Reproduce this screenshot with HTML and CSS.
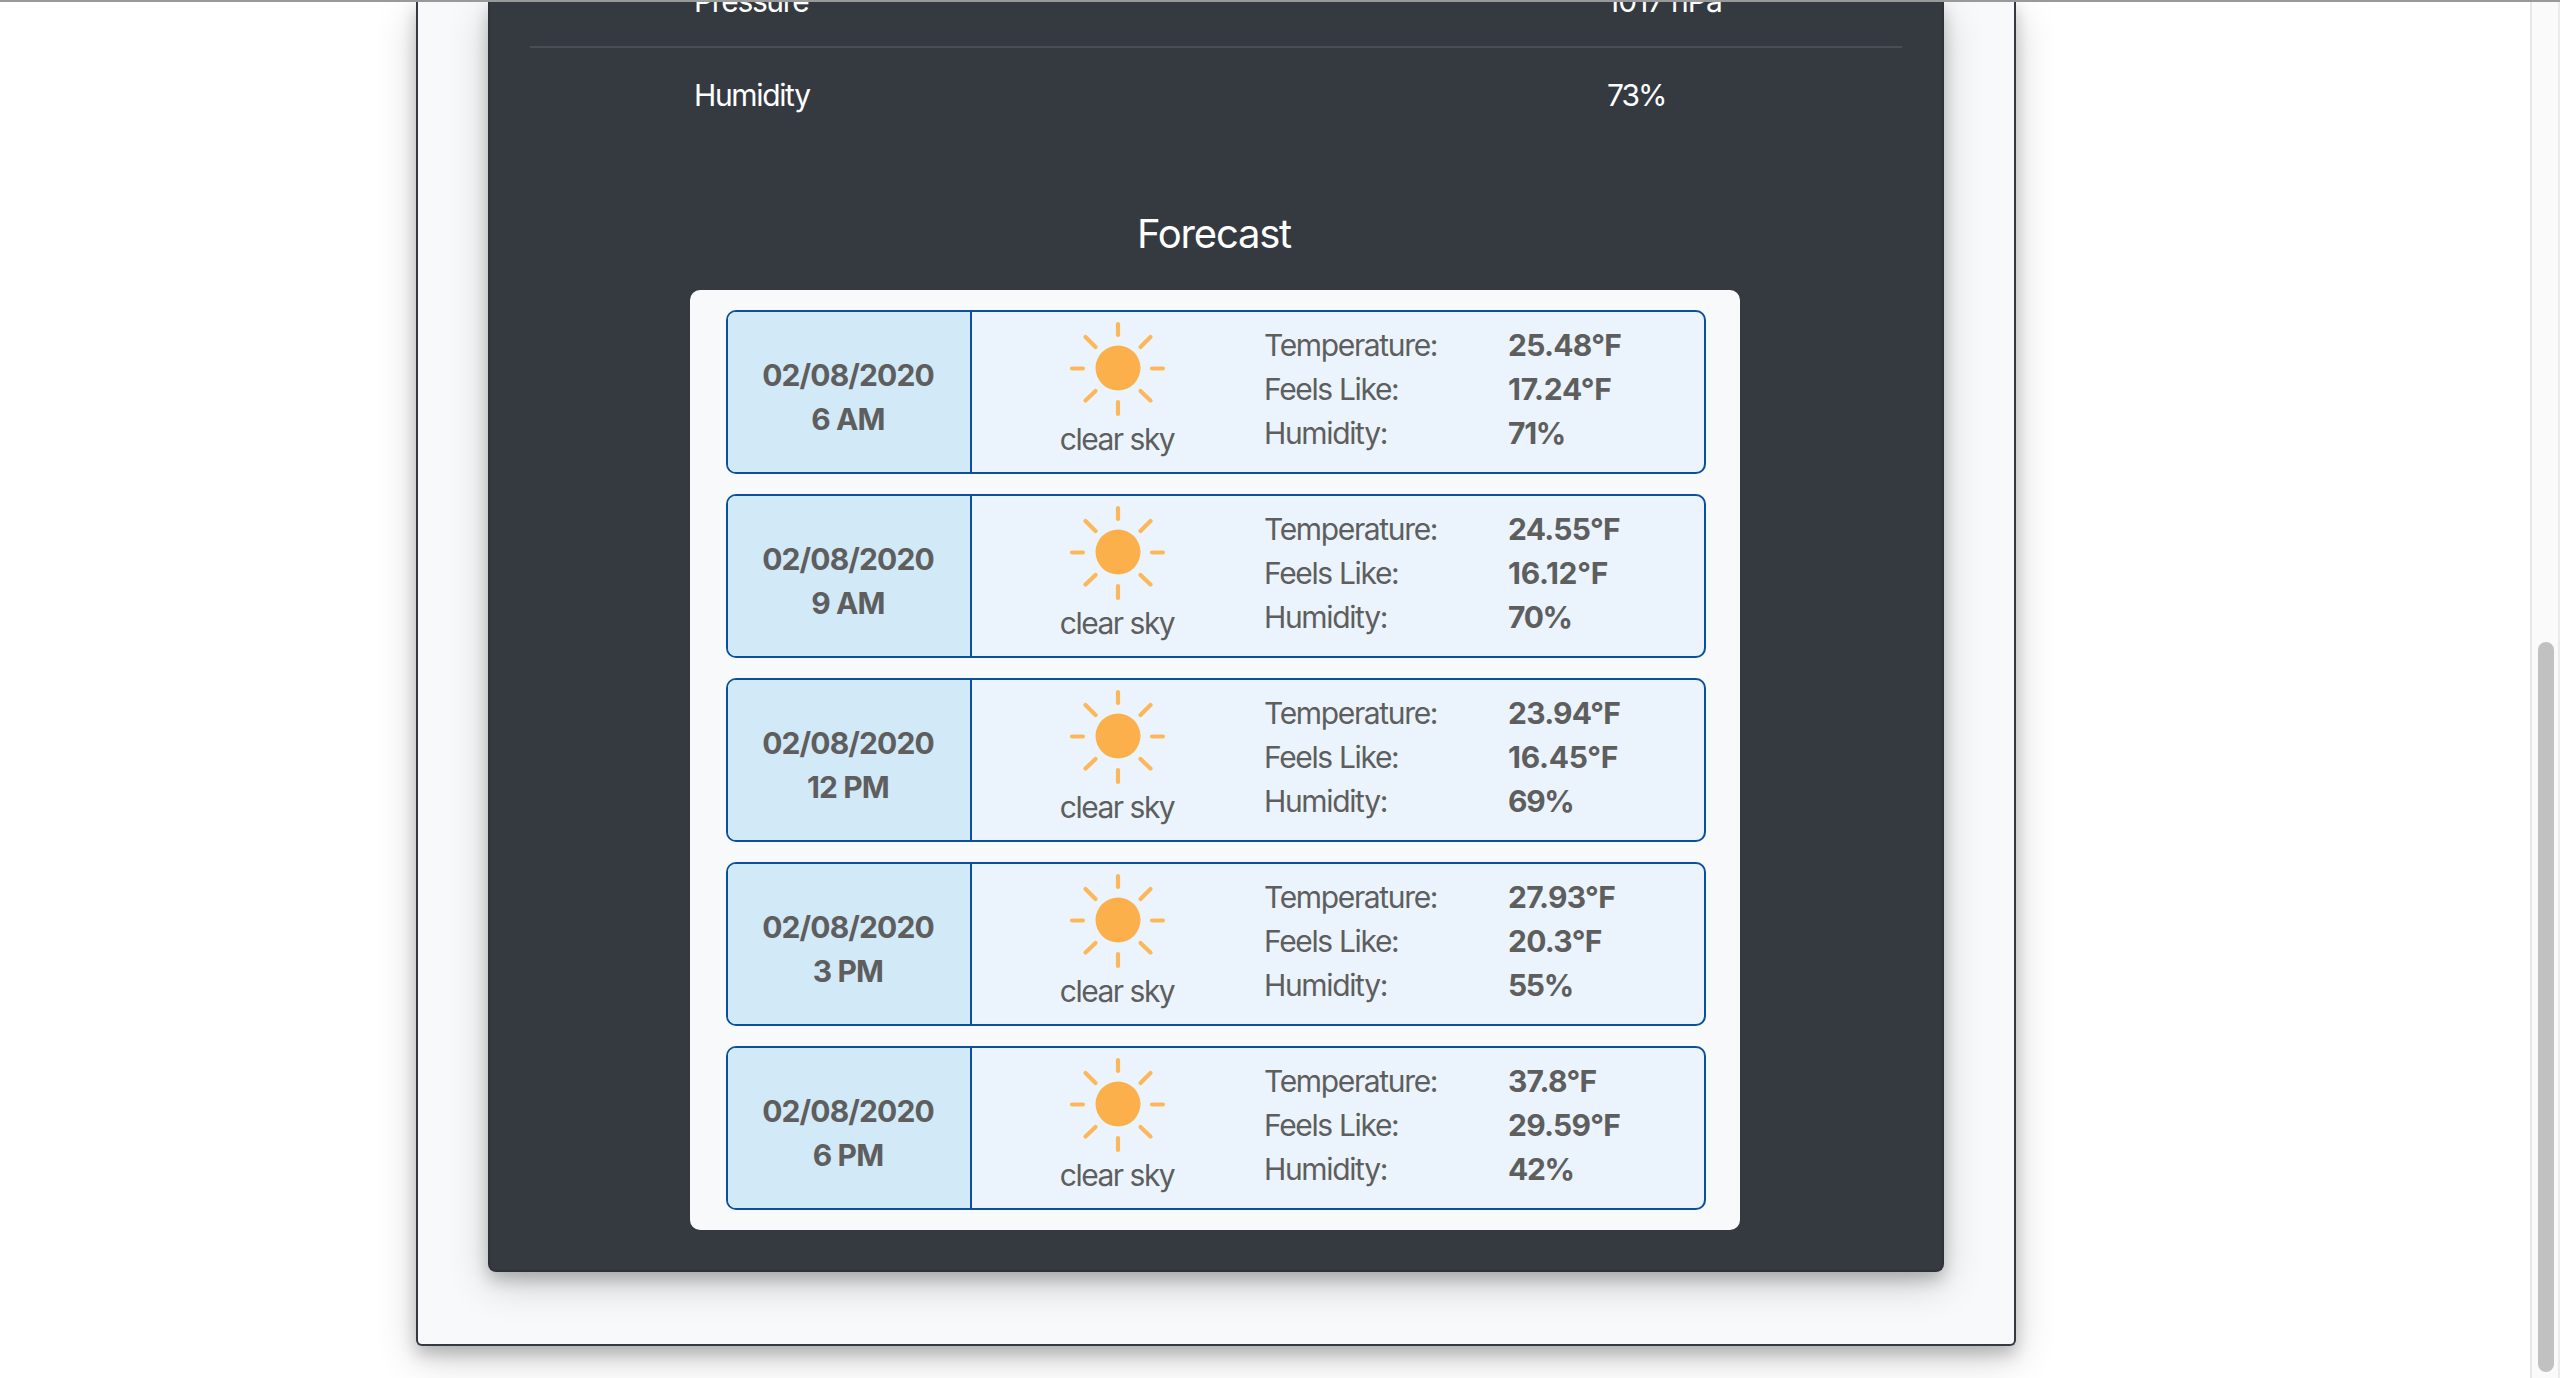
FILE: index.html
```
<!DOCTYPE html>
<html lang="en">
<head>
<meta charset="utf-8">
<title>Weather</title>
<link rel="stylesheet" href="styles.css">
</head>
<body>
<svg width="0" height="0" class="defs"><symbol id="sun" viewBox="0 0 100 100"><circle cx="50" cy="50" r="22.500"/><path d="M50 6v11M50 84v12M4 50.500h11M84 50.500h11M17.500 19l10 10M82.500 19l-10 10M17.500 82.500l10-9.500M82.500 82.500l-10-9.500"/></symbol></svg>
<main class="page">
  <section class="outer-card">
    <div class="inner-card">
      <div class="stat clipped"><span>Pressure</span><span class="hpa">1017 hPa</span></div>
      <div class="stat"><span>Humidity</span><span class="percent">73%</span></div>
      <h2 class="title">Forecast</h2>
      <div class="forecast">
        <article class="row">
          <div class="date"><span>02/08/2020</span><span>6 AM</span></div>
          <div class="sky"><svg class="sun"><use href="#sun"/></svg><span>clear sky</span></div>
          <div class="label"><div>Temperature:</div><div>Feels Like:</div><div>Humidity:</div></div>
          <div class="value"><div>25.48°F</div><div class="feels">17.24°F</div><div class="percent">71%</div></div>
        </article>
        <article class="row">
          <div class="date"><span>02/08/2020</span><span>9 AM</span></div>
          <div class="sky"><svg class="sun"><use href="#sun"/></svg><span>clear sky</span></div>
          <div class="label"><div>Temperature:</div><div>Feels Like:</div><div>Humidity:</div></div>
          <div class="value"><div>24.55°F</div><div class="feels">16.12°F</div><div class="percent">70%</div></div>
        </article>
        <article class="row">
          <div class="date"><span>02/08/2020</span><span>12 PM</span></div>
          <div class="sky"><svg class="sun"><use href="#sun"/></svg><span>clear sky</span></div>
          <div class="label"><div>Temperature:</div><div>Feels Like:</div><div>Humidity:</div></div>
          <div class="value"><div>23.94°F</div><div class="feels">16.45°F</div><div class="percent">69%</div></div>
        </article>
        <article class="row">
          <div class="date"><span>02/08/2020</span><span>3 PM</span></div>
          <div class="sky"><svg class="sun"><use href="#sun"/></svg><span>clear sky</span></div>
          <div class="label"><div>Temperature:</div><div>Feels Like:</div><div>Humidity:</div></div>
          <div class="value"><div>27.93°F</div><div>20.3°F</div><div class="percent">55%</div></div>
        </article>
        <article class="row">
          <div class="date"><span>02/08/2020</span><span>6 PM</span></div>
          <div class="sky"><svg class="sun"><use href="#sun"/></svg><span>clear sky</span></div>
          <div class="label"><div>Temperature:</div><div>Feels Like:</div><div>Humidity:</div></div>
          <div class="value"><div>37.8°F</div><div>29.59°F</div><div class="percent">42%</div></div>
        </article>
      </div>
    </div>
  </section>
</main>
<aside class="scrollbar"><div class="thumb"></div></aside>
</body>
</html>
```
FILE: styles.css
```
* { box-sizing: border-box; }
body {
  margin: 0;
  height: 1378px;
  overflow: hidden;
  display: flex;
  border-top: 2px solid #999;
  background: #fff;
  color: #5e5e5e;
  font: 30px/44px Inter, "Liberation Sans", sans-serif;
}
.defs { position: absolute; }
.page { flex: 1; overflow: hidden; padding-left: 416px; }
.outer-card {
  width: 1600px;
  height: 1344px;
  padding: 0 70px;
  border: 2px solid #343a40;
  border-top: 0;
  border-radius: 0 0 6px 6px;
  background: #f8f9fb;
  box-shadow: 0 8px 16px rgba(0,0,0,.2), 0 12px 40px rgba(0,0,0,.19);
}
.inner-card {
  display: flow-root;
  height: 1270px;
  padding: 0 40px;
  border: 2px solid #2e3339;
  border-top: 0;
  border-radius: 0 0 8px 8px;
  background: #353a41;
  color: #fff;
  box-shadow: 0 8px 16px rgba(0,0,0,.2), 0 12px 40px rgba(0,0,0,.19);
}
.stat {
  display: grid;
  grid-template-columns: 913px 1fr;
  padding: 25px 0 0 164px;
  border-top: 2px solid #454f55;
  letter-spacing: -1.35px;
}
.stat .hpa { letter-spacing: -.95px; }
.stat .percent { letter-spacing: -2px; }
.clipped { margin-top: -48px; height: 92px; border: 0; }
.title {
  margin: 93px 0 32px;
  padding-right: 4px;
  font-size: 40px;
  line-height: 48px;
  font-weight: 400;
  letter-spacing: -1.2px;
  text-align: center;
}
.forecast {
  width: 1050px;
  margin-left: 160px;
  padding: 20px 34px 20px 36px;
  border-radius: 10px;
  background: #f8f9fb;
  color: #5e5e5e;
  display: flex;
  flex-direction: column;
  gap: 20px;
}
.row {
  height: 164px;
  display: grid;
  grid-template-columns: 244px 291px 245px 1fr;
  border: 2px solid #0a50a1;
  border-radius: 10px;
  background: #ebf4fc;
  overflow: hidden;
}
.date {
  display: flex;
  flex-direction: column;
  justify-content: center;
  align-items: center;
  padding: 10px 2px 0 0;
  border-right: 2px solid #0a50a1;
  background: #d2e9f7;
  font-weight: 700;
  letter-spacing: -.9px;
}
.sky {
  display: flex;
  flex-direction: column;
  align-items: center;
  padding-top: 6px;
  letter-spacing: -1.5px;
}
.sky span { padding-right: 1px; }
.sun { width: 100px; height: 100px; margin-bottom: -1px; fill: #fbb04c; }
#sun path { stroke: #fbb85a; stroke-width: 4.2; stroke-linecap: round; }
.label { padding: 11px 0 0 1px; letter-spacing: -1.35px; }
.value { padding-top: 11px; font-weight: 700; letter-spacing: -.75px; }
.value .feels { letter-spacing: -.3px; }
.value .percent { letter-spacing: -1.3px; }
.scrollbar {
  width: 30px;
  padding: 640px 4px 0 6px;
  border-left: 2px solid #e7e7e7;
  border-right: 2px solid #ebebeb;
  background: #fafafa;
}
.thumb { width: 16px; height: 730px; border-radius: 8px; background: #c1c1c1; }
```
